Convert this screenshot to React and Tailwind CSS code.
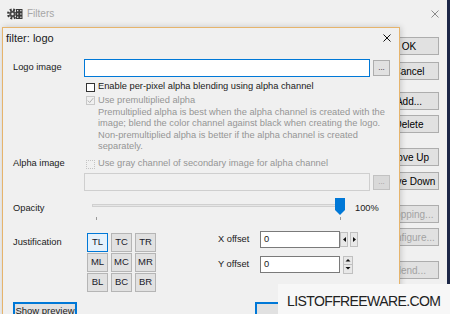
import React from "react";

function GearIcon() {
  return (
    <svg width="16" height="14" viewBox="0 0 16 14" className="shrink-0">
      <circle cx="5.5" cy="7" r="4.3" fill="none" stroke="#3a3a3a" strokeWidth="2.4" strokeDasharray="1.9 1.5" />
      <circle cx="5.5" cy="7" r="3.2" fill="#4a4a4a" />
      <circle cx="5.5" cy="7" r="1.2" fill="#f0f0f0" />
      <rect x="9" y="2" width="6.5" height="10" fill="#3a3a3a" />
      <rect x="10" y="3" width="1.3" height="1.3" fill="#e0e0e0" />
      <rect x="13.2" y="3" width="1.3" height="1.3" fill="#e0e0e0" />
      <rect x="10" y="6.3" width="1.3" height="1.3" fill="#e0e0e0" />
      <rect x="13.2" y="6.3" width="1.3" height="1.3" fill="#e0e0e0" />
      <rect x="10" y="9.6" width="1.3" height="1.3" fill="#e0e0e0" />
      <rect x="13.2" y="9.6" width="1.3" height="1.3" fill="#e0e0e0" />
    </svg>
  );
}

function XIcon({ color, size }) {
  return (
    <svg width={size} height={size} viewBox={`0 0 ${size} ${size}`} className="shrink-0">
      <path d={`M0.5 0.5 L${size - 0.5} ${size - 0.5} M${size - 0.5} 0.5 L0.5 ${size - 0.5}`} stroke={color} strokeWidth="1" />
    </svg>
  );
}

function BgBtn({ children, mt, disabled }) {
  return (
    <div
      className={`${mt} h-[18px] w-[63px] shrink-0 flex items-center justify-center pl-[3px] border border-[#adadad] bg-[#e1e1e1] text-[10px] ${
        disabled ? "text-[#a3a3a3]" : "text-black"
      }`}
    >
      {children}
    </div>
  );
}

function JBtn({ children, active }) {
  return (
    <div
      className={`h-[19px] w-[21px] flex items-center justify-center text-[9.5px] text-[#1a1a2a] ${
        active ? "border border-[#0078d7] bg-[#e5f1fb]" : "border border-[#b5b5b5] bg-[#e1e1e1]"
      }`}
    >
      {children}
    </div>
  );
}

function Tri({ dir }) {
  const paths = {
    left: "M4 1 L1 3.5 L4 6 Z",
    right: "M1 1 L4 3.5 L1 6 Z",
    up: "M0.5 3.5 L3 1 L5.5 3.5 Z",
    down: "M0.5 1 L3 3.5 L5.5 1 Z",
  };
  const vert = dir === "up" || dir === "down";
  return (
    <svg width={vert ? 6 : 5} height={vert ? 4.5 : 7} viewBox={vert ? "0 0 6 4.5" : "0 0 5 7"}>
      <path d={paths[dir]} fill="#111" />
    </svg>
  );
}

export default function App() {
  return (
    <div className="relative w-[450px] h-[314px] overflow-hidden bg-[#1c2747] font-['Liberation_Sans',Arial,sans-serif]">
      {/* Background window: Filters */}
      <div className="absolute left-0 top-0 w-[447px] h-[314px] bg-[#f0f0f0] flex flex-col">
        <div className="h-[27px] shrink-0 flex items-center pl-[7px] pr-[8px]">
          <GearIcon />
          <span className="ml-[4px] text-[10px] text-[#a6a6a6]">Filters</span>
          <div className="ml-auto">
            <XIcon color="#8a8a8a" size={8} />
          </div>
        </div>
        <div className="flex flex-col items-end pr-[8px]">
          <BgBtn mt="mt-[10px]">OK</BgBtn>
          <BgBtn mt="mt-[7px]">Cancel</BgBtn>
          <BgBtn mt="mt-[12px]">Add...</BgBtn>
          <BgBtn mt="mt-[5px]">Delete</BgBtn>
          <BgBtn mt="mt-[15px]">Move Up</BgBtn>
          <BgBtn mt="mt-[6px]">Move Down</BgBtn>
          <BgBtn mt="mt-[15px]" disabled>Cropping...</BgBtn>
          <BgBtn mt="mt-[5px]" disabled>Configure...</BgBtn>
          <BgBtn mt="mt-[15px]" disabled>Blend...</BgBtn>
          <BgBtn mt="mt-[6px]">Help</BgBtn>
        </div>
      </div>

      {/* Dialog: filter: logo */}
      <div className="absolute left-[2px] top-[27px] w-[398px] h-[300px] border border-[#e6b46c] bg-[#f0f0f0] shadow-[1px_0_6px_rgba(0,0,0,0.18)] flex flex-col text-[9.3px] text-[#1a1a1a]">
        <div className="h-[20px] shrink-0 flex items-center pl-[3px] pr-[8px]">
          <span className="text-[11px] text-[#1a1a1a]">filter: logo</span>
          <div className="ml-auto">
            <XIcon color="#111" size={8} />
          </div>
        </div>

        <div className="flex flex-col pl-[10px]">
          {/* Logo image */}
          <div className="mt-[11px] h-[18px] flex items-center">
            <span className="w-[71px] shrink-0">Logo image</span>
            <div className="w-[286px] h-[18px] border border-[#0078d7] bg-white" />
            <div className="ml-[3px] w-[17px] h-[16px] border border-[#adadad] bg-[#e1e1e1] flex items-center justify-center text-[8px] leading-none">...</div>
          </div>

          {/* Enable per-pixel */}
          <div className="mt-[4.25px] h-[11.5px] flex items-center ml-[73px]">
            <div className="w-[9px] h-[9px] border border-[#333] bg-white shrink-0" />
            <span className="ml-[3px]">Enable per-pixel alpha blending using alpha channel</span>
          </div>

          {/* Use premultiplied */}
          <div className="mt-[2.25px] h-[11.5px] flex items-center ml-[73px] text-[#959595]">
            <div className="w-[9px] h-[9px] border border-[#c8c8c8] bg-[#f0f0f0] shrink-0 flex items-center justify-center">
              <svg width="7" height="7" viewBox="0 0 7 7">
                <path d="M0.8 3.6 L2.7 5.5 L6.2 1.2" stroke="#a8a8a8" strokeWidth="0.9" fill="none" />
              </svg>
            </div>
            <span className="ml-[3px]">Use premultiplied alpha</span>
          </div>
          <div className="ml-[85px] w-[300px] leading-[11.5px] text-[#959595]">
            <div>Premultiplied alpha is best when the alpha channel is created with the</div>
            <div>image; blend the color channel against black when creating the logo.</div>
            <div>Non-premultiplied alpha is better if the alpha channel is created</div>
            <div>separately.</div>
          </div>

          {/* Alpha image */}
          <div className="mt-[5.75px] h-[11.5px] flex items-center">
            <span className="w-[71px] shrink-0">Alpha image</span>
            <div className="ml-[2px] w-[9px] h-[9px] border border-dotted border-[#c4c4c4] bg-[#f0f0f0] shrink-0" />
            <span className="ml-[3px] text-[#959595]">Use gray channel of secondary image for alpha channel</span>
          </div>

          <div className="mt-[3.25px] h-[18px] flex items-center ml-[71px]">
            <div className="w-[286px] h-[18px] border border-[#cfcfcf] bg-[#f0f0f0]" />
            <div className="ml-[3px] w-[17px] h-[15px] border border-[#c2c2c2] bg-[#d9d9d9] flex items-center justify-center text-[8px] leading-none text-[#9a9a9a]">...</div>
          </div>

          {/* Opacity */}
          <div className="mt-[6px] h-[24px] flex items-center">
            <span className="w-[71px] shrink-0">Opacity</span>
            <div className="relative w-[263px] h-[24px] shrink-0">
              <div className="absolute left-[8px] top-[7px] w-[253px] h-[3px] border border-[#d0d0d0] bg-[#e6e6e6]" />
              <div className="absolute left-[12px] top-[20px] w-px h-[3px] bg-[#9a9a9a]" />
              <div className="absolute left-[256px] top-[20px] w-px h-[3px] bg-[#9a9a9a]" />
              <svg className="absolute left-[251px] top-[1px]" width="10" height="17" viewBox="0 0 10 17">
                <path d="M0 0 H10 V12 L5 17 L0 12 Z" fill="#0078d7" />
              </svg>
            </div>
            <span className="ml-[8px]">100%</span>
          </div>

          {/* Justification + offsets */}
          <div className="mt-[12px] flex items-start">
            <span className="w-[71px] shrink-0 pt-[2.5px]">Justification</span>
            <div className="ml-[3px] grid grid-cols-[21px_21px_21px] gap-x-[3px] gap-y-[1px]">
              <JBtn active>TL</JBtn>
              <JBtn>TC</JBtn>
              <JBtn>TR</JBtn>
              <JBtn>ML</JBtn>
              <JBtn>MC</JBtn>
              <JBtn>MR</JBtn>
              <JBtn>BL</JBtn>
              <JBtn>BC</JBtn>
              <JBtn>BR</JBtn>
            </div>
            <div className="ml-[62px] mt-[-2px] flex flex-col gap-[8px]">
              <div className="h-[17px] flex items-center">
                <span className="w-[42px] shrink-0">X offset</span>
                <div className="w-[80px] h-[17px] border border-[#7a7a7a] bg-white flex items-center pl-[3px]">0</div>
                <div className="flex h-[15px]">
                  <div className="w-[8px] h-[15px] flex items-center justify-center border border-[#c0c0c0] bg-[#e8e8e8]"><Tri dir="left" /></div>
                  <div className="ml-[2px] w-[8px] h-[15px] flex items-center justify-center border border-[#c0c0c0] bg-[#e8e8e8]"><Tri dir="right" /></div>
                </div>
              </div>
              <div className="h-[17px] flex items-center">
                <span className="w-[42px] shrink-0">Y offset</span>
                <div className="w-[80px] h-[17px] border border-[#7a7a7a] bg-white flex items-center pl-[3px]">0</div>
                <div className="ml-[3px] flex flex-col w-[10px] h-[18px]">
                  <div className="h-[9px] flex items-center justify-center border border-[#c0c0c0] bg-[#e8e8e8]"><Tri dir="up" /></div>
                  <div className="h-[9px] flex items-center justify-center border border-[#c0c0c0] bg-[#e8e8e8] border-t-0"><Tri dir="down" /></div>
                </div>
              </div>
            </div>
          </div>

          {/* Bottom buttons */}
          <div className="mt-[10px] flex items-start">
            <div className="w-[64px] h-[18px] border-2 border-[#0078d7] bg-[#e1e1e1] flex items-center justify-center text-[9.5px]">Show preview</div>
            <div className="ml-[178px] w-[63px] h-[18px] border-2 border-[#0078d7] bg-[#e1e1e1] flex items-center justify-center text-[9.5px]">OK</div>
            <div className="ml-[4px] w-[63px] h-[18px] border border-[#adadad] bg-[#e1e1e1] flex items-center justify-center text-[9.5px]">Cancel</div>
          </div>
        </div>
      </div>

      {/* Watermark */}
      <div className="absolute left-[278px] top-[284px] w-[172px] h-[30px] bg-[#f7f7f7] flex items-center pl-[9px] pt-[4px]">
        <span className="text-[14px] tracking-[-0.6px] text-[#222]">LISTOFFREEWARE.COM</span>
      </div>
    </div>
  );
}
